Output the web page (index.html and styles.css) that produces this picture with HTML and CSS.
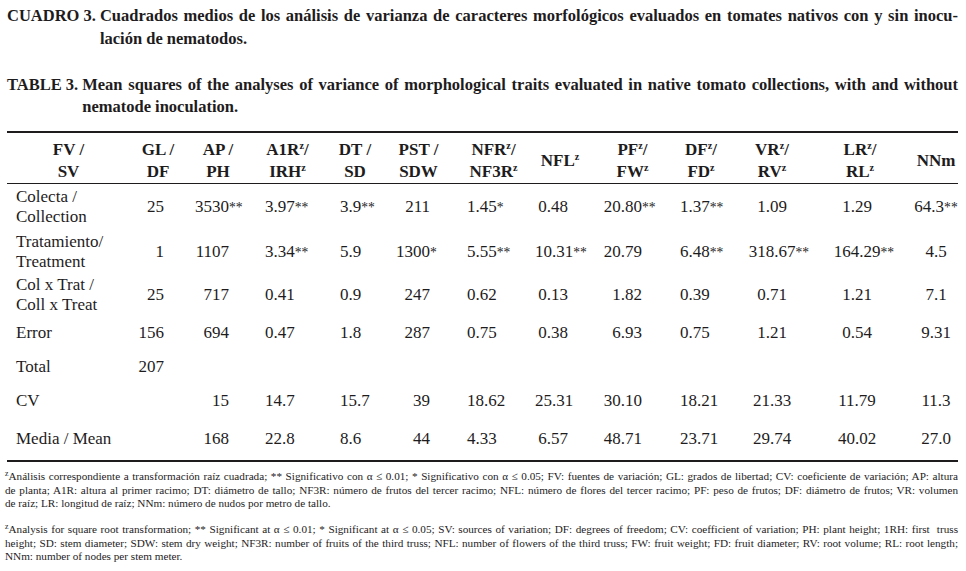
FILE: index.html
```html
<!DOCTYPE html>
<html lang="es">
<head>
<meta charset="utf-8">
<title>Cuadro 3</title>
<link rel="stylesheet" href="styles.css">
</head>
<body>
<div class="page">
  <div class="caption caption-es">
    <span class="cap-label">CUADRO 3.</span>
    <div class="cap-text">
      <span class="jline">Cuadrados medios de los análisis de varianza de caracteres morfológicos evaluados en tomates nativos con y sin inocu-</span>
      <span class="line">lación de nematodos.</span>
    </div>
  </div>
  <div class="caption caption-en">
    <span class="cap-label">TABLE 3.</span>
    <div class="cap-text">
      <span class="jline">Mean squares of the analyses of variance of morphological traits evaluated in native tomato collections, with and without</span>
      <span class="line">nematode inoculation.</span>
    </div>
  </div>

  <table class="anova">
    <colgroup>
      <col class="w1"><col class="w2"><col class="w3"><col class="w4"><col class="w5"><col class="w6"><col class="w7"><col class="w8"><col class="w9"><col class="w10"><col class="w11"><col class="w12"><col class="w13">
    </colgroup>
    <thead>
      <tr>
        <th>FV /<br>SV</th>
        <th>GL /<br>DF</th>
        <th>AP /<br>PH</th>
        <th>A1R<sup>z</sup>/<br>IRH<sup>z</sup></th>
        <th>DT /<br>SD</th>
        <th>PST /<br>SDW</th>
        <th>NFR<sup>z</sup>/<br>NF3R<sup>z</sup></th>
        <th>NFL<sup>z</sup></th>
        <th>PF<sup>z</sup>/<br>FW<sup>z</sup></th>
        <th>DF<sup>z</sup>/<br>FD<sup>z</sup></th>
        <th>VR<sup>z</sup>/<br>RV<sup>z</sup></th>
        <th>LR<sup>z</sup>/<br>RL<sup>z</sup></th>
        <th>NNm</th>
      </tr>
    </thead>
    <tbody>
      <tr class="row-a">
        <td>Colecta /<br>Collection</td>
        <td>25</td>
        <td>3530<span class="sig">**</span></td>
        <td>3.97<span class="sig">**</span></td>
        <td>3.9<span class="sig">**</span></td>
        <td>211</td>
        <td>1.45<span class="sig">*</span></td>
        <td>0.48</td>
        <td>20.80<span class="sig">**</span></td>
        <td>1.37<span class="sig">**</span></td>
        <td>1.09</td>
        <td>1.29</td>
        <td>64.3<span class="sig">**</span></td>
      </tr>
      <tr class="row-b">
        <td>Tratamiento/<br>Treatment</td>
        <td>1</td>
        <td>1107</td>
        <td>3.34<span class="sig">**</span></td>
        <td>5.9</td>
        <td>1300<span class="sig">*</span></td>
        <td>5.55<span class="sig">**</span></td>
        <td>10.31<span class="sig">**</span></td>
        <td>20.79</td>
        <td>6.48<span class="sig">**</span></td>
        <td>318.67<span class="sig">**</span></td>
        <td>164.29<span class="sig">**</span></td>
        <td>4.5</td>
      </tr>
      <tr class="row-c">
        <td>Col x Trat /<br>Coll x Treat</td>
        <td>25</td>
        <td>717</td>
        <td>0.41</td>
        <td>0.9</td>
        <td>247</td>
        <td>0.62</td>
        <td>0.13</td>
        <td>1.82</td>
        <td>0.39</td>
        <td>0.71</td>
        <td>1.21</td>
        <td>7.1</td>
      </tr>
      <tr class="row-d">
        <td>Error</td>
        <td>156</td>
        <td>694</td>
        <td>0.47</td>
        <td>1.8</td>
        <td>287</td>
        <td>0.75</td>
        <td>0.38</td>
        <td>6.93</td>
        <td>0.75</td>
        <td>1.21</td>
        <td>0.54</td>
        <td>9.31</td>
      </tr>
      <tr class="row-d">
        <td>Total</td>
        <td>207</td>
        <td></td><td></td><td></td><td></td><td></td><td></td><td></td><td></td><td></td><td></td><td></td>
      </tr>
      <tr class="row-e">
        <td>CV</td>
        <td></td>
        <td>15</td>
        <td>14.7</td>
        <td>15.7</td>
        <td>39</td>
        <td>18.62</td>
        <td>25.31</td>
        <td>30.10</td>
        <td>18.21</td>
        <td>21.33</td>
        <td>11.79</td>
        <td>11.3</td>
      </tr>
      <tr class="row-f">
        <td>Media / Mean</td>
        <td></td>
        <td>168</td>
        <td>22.8</td>
        <td>8.6</td>
        <td>44</td>
        <td>4.33</td>
        <td>6.57</td>
        <td>48.71</td>
        <td>23.71</td>
        <td>29.74</td>
        <td>40.02</td>
        <td>27.0</td>
      </tr>
    </tbody>
  </table>

  <div class="notes">
    <p class="note">
      <span class="jline"><sup>z</sup>Análisis correspondiente a transformación raíz cuadrada; ** Significativo con α ≤ 0.01; * Significativo con α ≤ 0.05; FV: fuentes de variación; GL: grados de libertad; CV: coeficiente de variación; AP: altura</span>
      <span class="jline">de planta; A1R: altura al primer racimo; DT: diámetro de tallo; NF3R: número de frutos del tercer racimo; NFL: número de flores del tercer racimo; PF: peso de frutos; DF: diámetro de frutos; VR: volumen</span>
      <span class="line">de raíz; LR: longitud de raíz; NNm: número de nudos por metro de tallo.</span>
    </p>
    <p class="note">
      <span class="jline"><sup>z</sup>Analysis for square root transformation; ** Significant at α ≤ 0.01; * Significant at α ≤ 0.05; SV: sources of variation; DF: degrees of freedom; CV: coefficient of variation; PH: plant height; 1RH: first&nbsp; truss</span>
      <span class="jline">height; SD: stem diameter; SDW: stem dry weight; NF3R: number of fruits of the third truss; NFL: number of flowers of the third truss; FW: fruit weight; FD: fruit diameter; RV: root volume; RL: root length;</span>
      <span class="line">NNm: number of nodes per stem meter.</span>
    </p>
  </div>
</div>
</body>
</html>
```

FILE: styles.css
```css
html, body {
  margin: 0;
  padding: 0;
  background: #ffffff;
}

body {
  font-family: "Liberation Serif", "Times New Roman", serif;
  color: #1e1c1d;
}

.page {
  width: 966px;
  box-sizing: border-box;
  padding: 4px 8px 0 7px;
}

/* Captions */
.caption {
  display: flex;
  font-weight: bold;
  font-size: 16.5px;
  line-height: 23px;
  padding-left: 0;
}

.caption-en {
  margin-top: 24px;
  line-height: 22px;
}

.cap-label {
  flex: none;
  padding-right: 4px;
}

.cap-text {
  flex: 1;
  min-width: 0;
}

.jline {
  display: block;
  white-space: nowrap;
  text-align: justify;
  text-align-last: justify;
}

.line {
  display: block;
  white-space: nowrap;
}

/* Table */
.anova {
  margin-top: 13px;
  width: 951px;
  table-layout: fixed;
  border-collapse: collapse;
  border-top: 2.5px solid #1e1c1d;
  border-bottom: 2.5px solid #1e1c1d;
  font-size: 17px;
}

.w1 { width: 123px; }
.w2 { width: 56px; }
.w3 { width: 64px; }
.w4 { width: 75px; }
.w5 { width: 60px; }
.w6 { width: 67px; }
.w7 { width: 83px; }
.w8 { width: 50px; }
.w9 { width: 95px; }
.w10 { width: 42px; }
.w11 { width: 100px; }
.w12 { width: 76px; }
.w13 { width: 60px; }

.anova th {
  font-weight: bold;
  line-height: 22px;
  padding: 6px 0 0;
  text-align: center;
  vertical-align: middle;
  white-space: nowrap;
  border-bottom: 1px solid #1e1c1d;
}

.anova th:nth-child(13) {
  padding-left: 16px;
}

.anova sup {
  font-size: 0.6em;
  line-height: 0;
  vertical-align: 0.55em;
}

.anova td {
  padding: 0;
  line-height: 20px;
  white-space: nowrap;
  vertical-align: middle;
}

.sig {
  display: inline-block;
  width: 0;
  font-size: 0.8em;
}

.anova td:nth-child(1) { text-align: left; padding-left: 9px; }
.anova td:nth-child(2) { text-align: right; padding-right: 22px; }
.anova td:nth-child(3) { text-align: right; padding-right: 21px; }
.anova td:nth-child(4) { text-align: left; padding-left: 15px; }
.anova td:nth-child(5) { text-align: left; padding-left: 15px; }
.anova td:nth-child(6) { text-align: right; padding-right: 22px; }
.anova td:nth-child(7) { text-align: left; padding-left: 15px; }
.anova td:nth-child(8) { text-align: right; padding-right: 17px; }
.anova td:nth-child(9) { text-align: right; padding-right: 38px; }
.anova td:nth-child(10) { text-align: left; padding-left: 0; }
.anova td:nth-child(11) { text-align: center; }
.anova td:nth-child(12) { text-align: center; padding-right: 6px; }
.anova td:nth-child(13) { text-align: center; padding-left: 16px; }
.anova td:nth-child(13) .sig { width: auto; }

.row-a td { height: 46px; }
.row-b td { height: 44px; }
.row-c td { height: 42px; }
.row-d td { height: 34px; }
.row-e td { height: 33px; }
.row-f td { height: 43px; }

/* Footnotes */
.notes {
  padding-top: 8px;
  margin-left: -2px;
}

.note {
  margin: 0 0 12.5px;
  font-size: 11.2px;
  line-height: 13.5px;
}

.note sup {
  font-size: 0.7em;
  line-height: 0;
  vertical-align: 0.5em;
}
```
